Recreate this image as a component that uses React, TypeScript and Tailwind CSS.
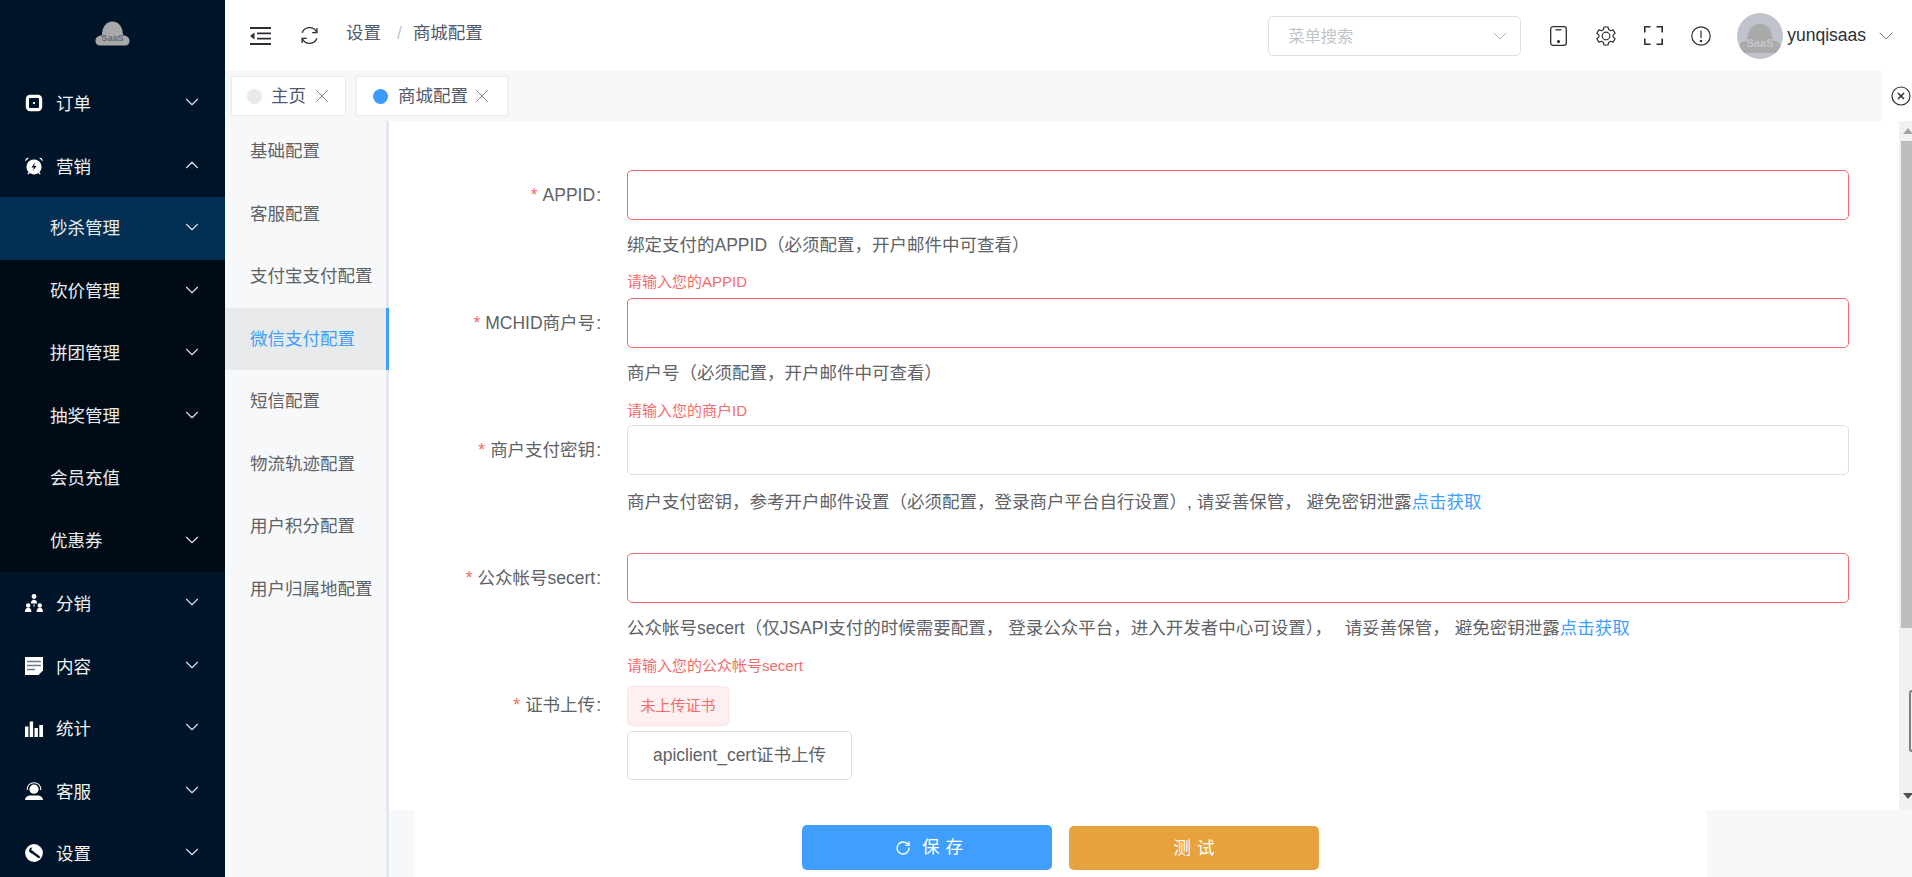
import React from "react";
import { ChevronDown, ChevronUp, X, RotateCw } from "lucide-react";

const Cloud = ({ fill, textFill, className }: { fill: string; textFill: string; className?: string }) => (
  <svg viewBox="0 0 36 26" className={className}>
    <path fill={fill} d="M5 25.500C2 25.500 0.300 23.400 0.300 20.800 0.300 17.500 2.300 15.500 7 14.800 7.300 6 11.600 0.500 18 0.500S28.700 6 29 14.800c4.700.7 6.700 2.700 6.700 6 0 2.600-1.700 4.700-4.700 4.700Z" />
    <text x="18" y="20.500" textAnchor="middle" fontSize="9.500" fontWeight="700" fill={textFill} fontFamily="'Liberation Sans', sans-serif">SaaS</text>
  </svg>
);

const IOrder = () => (
  <svg viewBox="0 0 18 18" className="w-[18px] h-[18px]">
    <path fill="#fff" fillRule="evenodd" d="M5 .8h8A4.200 4.200 0 0 1 17.200 5v8A4.200 4.200 0 0 1 13 17.200H5A4.200 4.200 0 0 1 .8 13V5A4.200 4.200 0 0 1 5 .8Zm-.2 3.200a.9.9 0 0 0-.8.8v8.400c0 .5.400.8.8.8h8.400c.4 0 .8-.3.800-.8V4.800a.9.9 0 0 0-.8-.8ZM8 8h2v2H8Z" />
  </svg>
);
const IAlarm = () => (
  <svg viewBox="0 0 18 18" className="w-[18px] h-[18px]">
    <path fill="#fff" fillRule="evenodd" d="M9 2.500a7.500 7.500 0 0 1 5.400 12.700l1.300 1.600-1.100.7-1.300-1.400A7.500 7.500 0 0 1 9 17.500a7.500 7.500 0 0 1-4.300-1.400l-1.300 1.400-1.100-.7 1.300-1.600A7.500 7.500 0 0 1 9 2.500Zm1 3-3.500 5H9l-1 3.500 3.500-5H9.200Z" />
    <path fill="#fff" d="M.3 4.500 3.800.9C2 .2.100 2 .3 4.500Zm17.400 0L14.200.9c1.800-.7 3.700 1.100 3.500 3.600Z" />
  </svg>
);
const IShare = () => (
  <svg viewBox="0 0 18 18" className="w-[18px] h-[18px]" fill="#fff">
    <circle cx="9" cy="2.500" r="2.400" />
    <path d="M5.800 9.500c0-2.500 1.400-3.800 3.200-3.800s3.200 1.300 3.200 3.800Z" />
    <circle cx="3.200" cy="11.500" r="2.200" />
    <path d="M0 18c0-3 1.300-4.300 3.200-4.300S6.400 15 6.400 18Z" />
    <circle cx="14.800" cy="11.500" r="2.200" />
    <path d="M11.600 18c0-3 1.300-4.300 3.200-4.300S18 15 18 18Z" />
    <path d="M8.600 10h.8v3h-.8Z" />
  </svg>
);
const IDoc = () => (
  <svg viewBox="0 0 18 18" className="w-[18px] h-[18px]">
    <path fill="#fff" d="M0 0h18v13.500L13.500 18H0Z" />
    <path stroke="#6b7786" strokeWidth="1.400" d="M2 4.500h14M2 8.500h14M2 12.500h8" />
  </svg>
);
const IBars = () => (
  <svg viewBox="0 0 18 18" className="w-[18px] h-[18px]" fill="#fff">
    <path d="M0 7.500h3.400V18H0ZM4.700 2.500h3.400V18H4.700ZM9.500 9h3.400v9H9.500ZM14.300 6h3.700v12h-3.700Z" />
  </svg>
);
const IService = () => (
  <svg viewBox="0 0 18 18" className="w-[18px] h-[18px]">
    <path fill="none" stroke="#fff" strokeWidth="1.100" d="M2.200 8C2.200 3.500 5 .7 9 .7s6.800 2.800 6.800 7.300" />
    <circle cx="9" cy="7.200" r="4.600" fill="#fff" />
    <path fill="#fff" d="M0 18c0-2.600 2.500-4.500 5.500-4.500h7c3 0 5.500 1.900 5.500 4.500Z" />
  </svg>
);
const IWrench = () => (
  <svg viewBox="0 0 18 18" className="w-[18px] h-[18px]">
    <circle cx="9" cy="9" r="8.900" fill="#fff" />
    <path stroke="#001429" strokeWidth="2.300" strokeLinecap="round" d="m7 8 6.800 5" />
    <path fill="#001429" d="M7.600 3.600 6 5.800l2.600 1.600-1 2.100A3.400 3.400 0 0 1 4 6a3.400 3.400 0 0 1 3.600-2.400Z" />
  </svg>
);

const Item = ({ icon, label, open, sub, active, noArrow }: { icon?: React.ReactNode; label: string; open?: boolean; sub?: boolean; active?: boolean; noArrow?: boolean }) => (
  <div className={`h-[62.5px] shrink-0 flex items-center pr-[22px] ${sub ? "pl-[50px]" : "pl-[25px]"} ${active ? "bg-[#033052]" : ""}`}>
    {icon && <span className="w-[31px] flex shrink-0">{icon}</span>}
    <span className={`flex-1 text-[17.5px] ${sub ? "text-[#e8ebee]" : "text-[#f0f2f4] pt-[2px]"}`}>{label}</span>
    {!noArrow && (open ? <ChevronUp size={22} strokeWidth={1.200} className="text-[#dfe3e7] -mt-[2px]" /> : <ChevronDown size={22} strokeWidth={1.200} className="text-[#dfe3e7] -mt-[2px]" />)}
  </div>
);

const Sidebar = () => (
  <aside className="w-[225px] shrink-0 h-full bg-[#001429] flex flex-col overflow-hidden">
    <div className="h-[72px] shrink-0 flex justify-center pt-[21px]">
      <Cloud fill="#a8a8a8" textFill="#5f6b78" className="w-[35px] h-[25px]" />
    </div>
    <Item icon={<IOrder />} label="订单" />
    <Item icon={<IAlarm />} label="营销" open />
    <div className="bg-[#000b16] flex flex-col shrink-0">
      <Item sub active label="秒杀管理" />
      <Item sub label="砍价管理" />
      <Item sub label="拼团管理" />
      <Item sub label="抽奖管理" />
      <Item sub noArrow label="会员充值" />
      <Item sub label="优惠券" />
    </div>
    <Item icon={<IShare />} label="分销" />
    <Item icon={<IDoc />} label="内容" />
    <Item icon={<IBars />} label="统计" />
    <Item icon={<IService />} label="客服" />
    <Item icon={<IWrench />} label="设置" />
  </aside>
);

const IFold = () => (
  <svg viewBox="0 0 21 18" className="w-[21px] h-[18px]" fill="#2b2f36">
    <path d="M0 0h21v2H0ZM0 16h21v2H0ZM7 5.500h14v1.700H7ZM7 10.800h14v1.700H7ZM4.500 5.500v7L0 9Z" />
  </svg>
);
const IRefresh = () => (
  <svg viewBox="0 0 20 20" className="w-[19px] h-[19px]" fill="none" stroke="#2b2f36" strokeWidth="1.400">
    <path d="M17.500 6.500A8.300 8.300 0 0 0 2.200 7" />
    <path d="M2.500 13.500A8.300 8.300 0 0 0 17.800 13" />
    <path d="M17.800 2v5h-5M2.200 18v-5h5" />
  </svg>
);
const IPhone = () => (
  <svg viewBox="0 0 17 20" className="w-[17px] h-[20px]" fill="none" stroke="#2b2f36" strokeWidth="1.300">
    <rect x=".7" y=".7" width="15.600" height="18.600" rx="2.200" />
    <path d="M5.500 3.800h6" />
    <circle cx="8.500" cy="15.500" r=".9" fill="#2b2f36" />
  </svg>
);
const IGear = () => (
  <svg viewBox="0 0 20 20" className="w-[20px] h-[20px]" fill="none" stroke="#2b2f36" strokeWidth="1.200">
    <path strokeLinejoin="round" d="M8 1h4l.6 2.600 1.900 1.100 2.600-.8 2 3.400-2 1.800v1.800l2 1.800-2 3.400-2.600-.8-1.900 1.100L12 19H8l-.6-2.600-1.900-1.100-2.600.8-2-3.400 2-1.800V9.100l-2-1.800 2-3.400 2.600.8 1.900-1.100Z" />
    <circle cx="10" cy="10" r="3.800" />
  </svg>
);
const IFull = () => (
  <svg viewBox="0 0 19 19" className="w-[19px] h-[19px]" fill="none" stroke="#2b2f36" strokeWidth="1.600">
    <path d="M.8 6.500V.8h5.700M12.500.8h5.700v5.700M18.200 12.500v5.700h-5.700M6.500 18.200H.8v-5.700" />
  </svg>
);
const IAlert = () => (
  <svg viewBox="0 0 20 20" className="w-[20px] h-[20px]" fill="none" stroke="#2b2f36" strokeWidth="1.200">
    <circle cx="10" cy="10" r="9.200" />
    <path d="M10 4.500v7.500" />
    <circle cx="10" cy="15" r=".7" fill="#2b2f36" />
  </svg>
);

const Header = () => (
  <header className="h-[71px] shrink-0 bg-white flex items-center pl-[25px] pr-[14.5px]">
    <IFold />
    <span className="ml-[29px]"><IRefresh /></span>
    <span className="ml-[27px] text-[17.5px] text-[#515a6e] -mt-[4px]">设置</span>
    <span className="ml-[16px] text-[17.5px] text-[#c0c4cc] -mt-[4px]">/</span>
    <span className="ml-[11px] text-[17.5px] text-[#515a6e] -mt-[4px]">商城配置</span>
    <div className="ml-auto w-[253px] h-[40px] rounded-[5px] border border-[#dcdfe6] flex items-center pl-[19px] pr-[8px]">
      <span className="flex-1 text-[16.25px] text-[#c0c4cc] pt-[1px]">菜单搜索</span>
      <ChevronDown size={24} strokeWidth={0.900} className="text-[#a8acb3]" />
    </div>
    <span className="ml-[29px] flex"><IPhone /></span>
    <span className="ml-[29px] flex"><IGear /></span>
    <span className="ml-[28px] flex"><IFull /></span>
    <span className="ml-[28px] flex"><IAlert /></span>
    <div className="ml-[26px] w-[46px] h-[46px] rounded-full bg-[#bfc3cb] flex items-center justify-center overflow-hidden">
      <Cloud fill="#a9a9a9" textFill="#c3c5c9" className="w-[42px] h-[31px] mt-[6px]" />
    </div>
    <span className="ml-[4px] text-[17.5px] text-[#2b2f36]">yunqisaas</span>
    <ChevronDown size={24} strokeWidth={0.900} className="ml-[7.5px] text-[#606266]" />
  </header>
);

const Tab = ({ label, active, w }: { label: string; active?: boolean; w: string }) => (
  <div className={`h-[40px] bg-white border border-[#e8eaec] flex items-center ${active ? "pl-[16px]" : "pl-[15px]"} ${w}`}>
    <span className={`w-[15px] h-[15px] rounded-full ${active ? "bg-[#3d9bff]" : "bg-[#e8eaec]"}`} />
    <span className={`${active ? "ml-[10px]" : "ml-[9px]"} pt-[1px] text-[17.5px] text-[#515a6e]`}>{label}</span>
    <X size={22} strokeWidth={0.800} className={`${active ? "ml-[3px]" : "ml-[5px]"} text-[#515a6e]`} />
  </div>
);

const Tabs = () => (
  <div className="h-[50px] shrink-0 flex">
    <div className="w-[1657px] bg-[#f5f7f9] flex items-center gap-[10px] pl-[6px]">
      <Tab label="主页" w="w-[115px]" />
      <Tab label="商城配置" active w="w-[152px]" />
    </div>
    <div className="flex-1 flex items-center pl-[9px] bg-white">
      <svg viewBox="0 0 20 20" className="w-[20px] h-[20px] shrink-0" fill="none" stroke="#2b2f36" strokeWidth="1.200">
        <circle cx="10" cy="10" r="9" />
        <path strokeWidth="1.500" d="m7 7 6 6M13 7l-6 6" />
      </svg>
    </div>
  </div>
);

const SideMenu = () => {
  const items = ["基础配置", "客服配置", "支付宝支付配置", "微信支付配置", "短信配置", "物流轨迹配置", "用户积分配置", "用户归属地配置"];
  return (
    <nav className="w-[164px] shrink-0 border-r-[3px] border-[#e5e7f0] flex flex-col">
      <div className="-mt-[1px] flex flex-col">
        {items.map((t, i) => (
          <div
            key={t}
            className={`h-[62.5px] shrink-0 flex items-center pl-[25px] text-[17.5px] whitespace-nowrap ${i === 3 ? "bg-[#e8eaec] text-[#409eff] -mr-[3px] border-r-[3px] border-[#409eff]" : "text-[#606266]"}`}
          >
            {t}
          </div>
        ))}
      </div>
    </nav>
  );
};

const Label = ({ children, className }: { children: React.ReactNode; className?: string }) => (
  <div className={`w-[238px] shrink-0 pr-[26px] flex justify-end items-center text-[17.5px] text-[#606266] ${className ?? ""}`}>
    <span className="text-[#f56c6c] mr-[5px]">*</span>
    <span>{children}</span>
    <span className="ml-[1px]">:</span>
  </div>
);

const Row = ({ label, error }: { label: string; error?: boolean }) => (
  <div className="flex h-[50px]">
    <Label>{label}</Label>
    <div className={`w-[1222px] h-[50px] rounded-[5px] bg-white border ${error ? "border-[#f56c6c]" : "border-[#dcdfe6]"}`} />
  </div>
);

const Help = ({ children, className }: { children: React.ReactNode; className?: string }) => (
  <div className={`pl-[238px] h-[50px] flex items-center text-[17.5px] text-[#606266] whitespace-pre ${className ?? ""}`}>{children}</div>
);

const Err = ({ children, className }: { children: React.ReactNode; className: string }) => (
  <div className={`pl-[238px] text-[15px] text-[#f56c6c] ${className}`}>{children}</div>
);

const Form = () => (
  <div className="flex-1 bg-white pt-[49px] overflow-hidden">
    <Row label="APPID" error />
    <Help>绑定支付的APPID（必须配置，开户邮件中可查看）</Help>
    <Err className="h-[28px] leading-[24px]">请输入您的APPID</Err>
    <Row label="MCHID商户号" error />
    <Help>商户号（必须配置，开户邮件中可查看）</Help>
    <Err className="h-[27px] leading-[26px]">请输入您的商户ID</Err>
    <Row label="商户支付密钥" />
    <Help className="mt-[2px]">
      <span>商户支付密钥，参考开户邮件设置（必须配置，登录商户平台自行设置）, 请妥善保管， 避免密钥泄露</span>
      <span className="text-[#409eff]">点击获取</span>
    </Help>
    <div className="h-[26px]" />
    <Row label="公众帐号secert" error />
    <Help>
      <span>公众帐号secert（仅JSAPI支付的时候需要配置， 登录公众平台，进入开发者中心可设置）， </span>
      <span className="ml-[8px]">请妥善保管， 避免密钥泄露</span>
      <span className="text-[#409eff]">点击获取</span>
    </Help>
    <Err className="h-[33px] leading-[26px]">请输入您的公众帐号secert</Err>
    <div className="flex items-start">
      <Label className="h-[38px]">证书上传</Label>
      <div className="flex flex-col items-start">
        <div className="w-[102px] h-[40px] rounded-[5px] bg-[#fef0f0] border border-[#fde2e2] flex items-center justify-center text-[15px] text-[#f56c6c]">未上传证书</div>
        <div className="mt-[5px] w-[225px] h-[49px] rounded-[5px] border border-[#dcdfe6] flex items-center justify-center text-[17.5px] text-[#606266]">apiclient_cert证书上传</div>
      </div>
    </div>
  </div>
);

const Scrollbar = () => (
  <div className="w-[13px] shrink-0 bg-[#f1f1f1] flex flex-col">
    <div className="h-[20px] shrink-0 flex justify-end pt-[7px]">
      <span className="w-0 h-0 border-x-[5px] border-x-transparent border-b-[6px] border-b-[#a3a3a3] -mr-[1px]" />
    </div>
    <div className="h-[487px] shrink-0 ml-[2px] bg-[#bdbdbd]" />
    <div className="h-[62px] mt-[62px] ml-[10px] shrink-0 rounded-l-[5px] border-2 border-r-0 border-[#7f7f7f]" />
    <div className="mt-[41px] flex justify-end">
      <span className="w-0 h-0 border-x-[5px] border-x-transparent border-t-[6px] border-t-[#505050] -mr-[1px]" />
    </div>
  </div>
);

const Footer = () => (
  <div className="h-[67px] shrink-0 pl-[26px] flex">
    <div className="w-[1292px] bg-white pl-[387px] pt-[15px] flex gap-[17px] items-start">
      <button className="w-[250px] h-[45px] rounded-[5px] bg-[#409eff] text-white text-[17.5px] flex items-center justify-center tracking-[6px] pl-[10px]">
        <RotateCw size={16} strokeWidth={2} className="mr-[11px]" />保存
      </button>
      <button className="mt-[1px] w-[250px] h-[44px] rounded-[5px] bg-[#e6a23c] text-white text-[17.5px] flex items-center justify-center tracking-[6px] pl-[6px]">测试</button>
    </div>
  </div>
);

export default function App() {
  return (
    <div className="w-[1912px] h-[877px] flex overflow-hidden bg-white [font-family:'Liberation_Sans','Noto_Sans_CJK_SC',sans-serif]">
      <Sidebar />
      <main className="flex-1 min-w-0 flex flex-col">
        <Header />
        <Tabs />
        <div className="flex-1 flex min-h-0 bg-[#f7f8fa]">
          <SideMenu />
          <div className="flex-1 min-w-0 flex flex-col">
            <div className="h-[689px] shrink-0 flex">
              <Form />
              <Scrollbar />
            </div>
            <Footer />
          </div>
        </div>
      </main>
    </div>
  );
}
